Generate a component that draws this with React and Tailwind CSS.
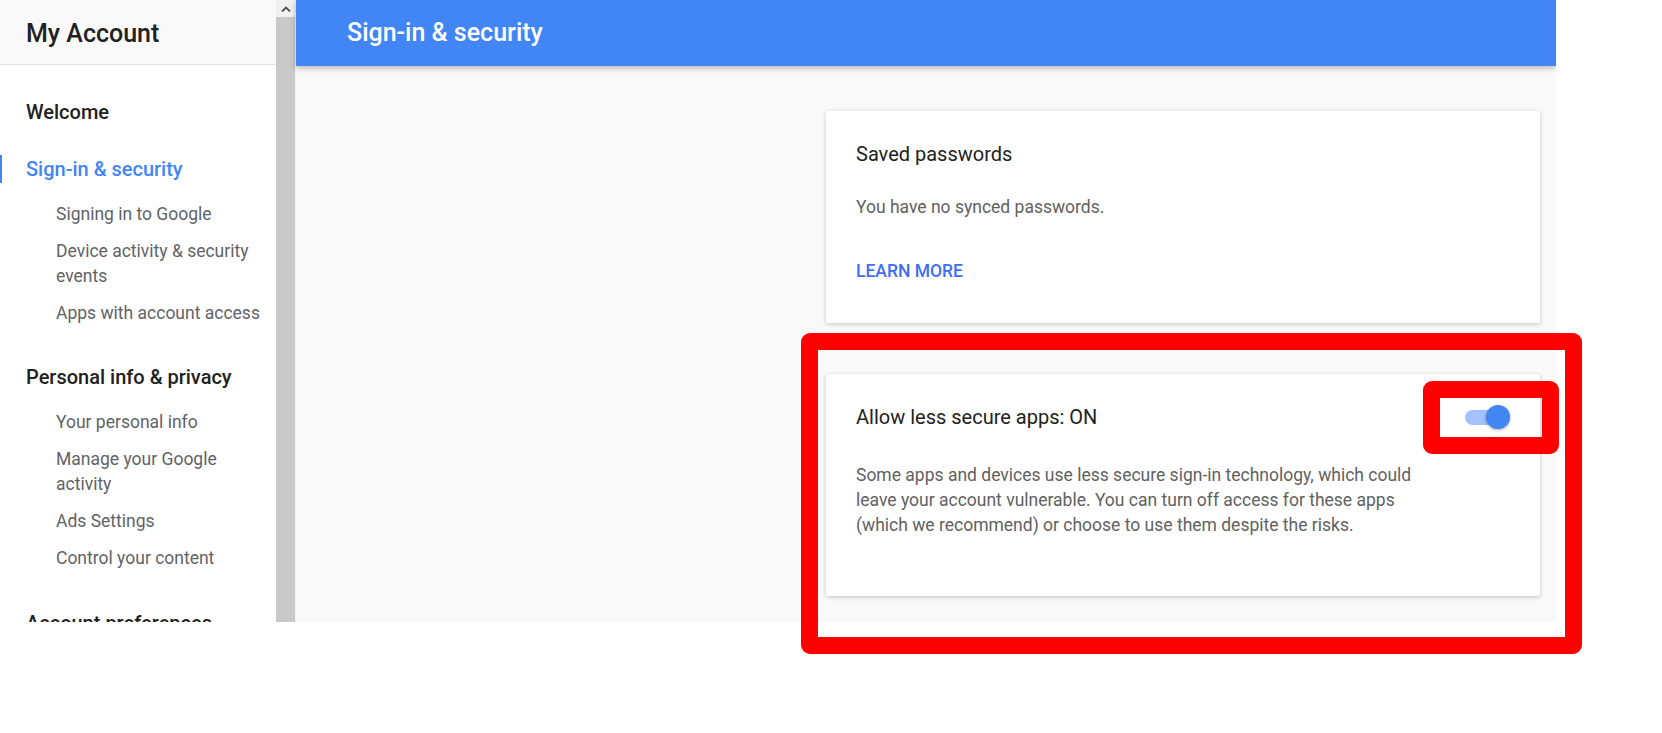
import React from 'react';

const sections = [
  { title: 'Welcome', items: [], mt: 'mt-[33px]' },
  {
    title: 'Sign-in & security',
    active: true,
    mt: 'mt-[29px]',
    items: ['Signing in to Google', 'Device activity & security events', 'Apps with account access'],
  },
  {
    title: 'Personal info & privacy',
    mt: 'mt-[31px]',
    items: ['Your personal info', 'Manage your Google activity', 'Ads Settings', 'Control your content'],
  },
  { title: 'Account preferences', items: [], mt: 'mt-[32px]' },
];

function Sidebar() {
  return (
    <div className="w-[276px] shrink-0 bg-white flex flex-col overflow-hidden">
      <div className="h-[65px] shrink-0 bg-[#f9f9f9] border-b border-[#e3e3e3] flex items-center pl-[26px] pt-[3px] text-[25px] font-medium text-[#212121]">
        My Account
      </div>
      <nav>
        {sections.map((s) => (
          <div key={s.title} className={s.mt}>
            <div
              className={
                s.active
                  ? 'border-l-[2px] border-[#4285f4] pl-[24px] text-[20px] leading-[28px] font-medium text-[#4285f4]'
                  : 'pl-[26px] text-[20px] leading-[28px] font-medium text-[#212121]'
              }
            >
              {s.title}
            </div>
            {s.items.length > 0 && (
              <ul className="mt-[13px]">
                {s.items.map((item) => (
                  <li key={item} className="pl-[56px] pr-[4px] py-[6px] text-[17.5px] leading-[25px] text-[#5f6368]">
                    {item}
                  </li>
                ))}
              </ul>
            )}
          </div>
        ))}
      </nav>
    </div>
  );
}

function Scrollbar() {
  return (
    <div className="w-[19px] shrink-0 flex flex-col">
      <div className="h-[17px] bg-[#f1f1f1] flex items-center justify-center">
        <svg width="10" height="6" viewBox="0 0 10 6">
          <polyline points="1,5.5 5,1.5 9,5.5" fill="none" stroke="#505050" strokeWidth="1.8" />
        </svg>
      </div>
      <div className="flex-1 bg-[#c9c9c9]" />
    </div>
  );
}

function Toggle() {
  return (
    <div className="relative w-[45px] h-[25px] shrink-0">
      <div className="absolute left-0 right-[2px] top-[5px] h-[15px] rounded-full bg-[#a1c2fa]" />
      <div className="absolute right-0 top-0 w-[24px] h-[24px] rounded-full bg-[#4285f4] shadow-[0_1px_3px_rgba(0,0,0,0.35)]" />
    </div>
  );
}

function Card({ children, className }) {
  return (
    <div className={`w-[714px] bg-white rounded-[2px] shadow-[0_1px_4px_rgba(0,0,0,0.22)] px-[30px] ${className}`}>
      {children}
    </div>
  );
}

export default function App() {
  return (
    <div className="relative w-[1662px] h-[733px] bg-white overflow-hidden" style={{ fontFamily: 'Roboto, "Noto Sans", Arial, sans-serif' }}>
      <div className="flex w-[1556px] h-[622px] overflow-hidden">
        <Sidebar />
        <Scrollbar />
        <div className="w-[1px] shrink-0 bg-[#f3f3f3]" />
        <main className="flex-1 bg-[#f9f9f9] flex flex-col">
          <header className="relative z-10 h-[66px] shrink-0 bg-[#4285f4] shadow-[0_2px_6px_rgba(0,0,0,0.28)] flex items-center pl-[51px] text-[25px] font-medium text-white">
            Sign-in &amp; security
          </header>
          <div className="flex flex-col items-end pr-[16px] pt-[45px] gap-[51px]">
            <Card className="pt-[29px] pb-[39px]">
              <div className="text-[20px] leading-[28px] text-[#212121]">Saved passwords</div>
              <div className="mt-[27px] text-[17.5px] leading-[25px] text-[#616161]">You have no synced passwords.</div>
              <div className="mt-[39px] text-[17.5px] leading-[25px] font-medium text-[#3d6ef5]">LEARN MORE</div>
            </Card>
            <Card className="pt-[29px] pb-[58px]">
              <div className="flex items-center justify-between">
                <div className="text-[20px] leading-[28px] text-[#212121]">Allow less secure apps: ON</div>
                <Toggle />
              </div>
              <p className="mt-[32px] max-w-[570px] text-[17.5px] leading-[25px] text-[#616161]">
                Some apps and devices use less secure sign-in technology, which could leave your account vulnerable. You can turn off access for these apps (which we recommend) or choose to use them despite the risks.
              </p>
            </Card>
          </div>
        </main>
      </div>

      {/* red annotation boxes */}
      <div className="absolute left-[801px] top-[333px] w-[781px] h-[321px] border-[17px] border-[#ff0000] rounded-[9px]" />
      <div className="absolute left-[1423px] top-[381px] w-[136px] h-[73px] border-[17px] border-[#ff0000] rounded-[9px]" />
    </div>
  );
}
